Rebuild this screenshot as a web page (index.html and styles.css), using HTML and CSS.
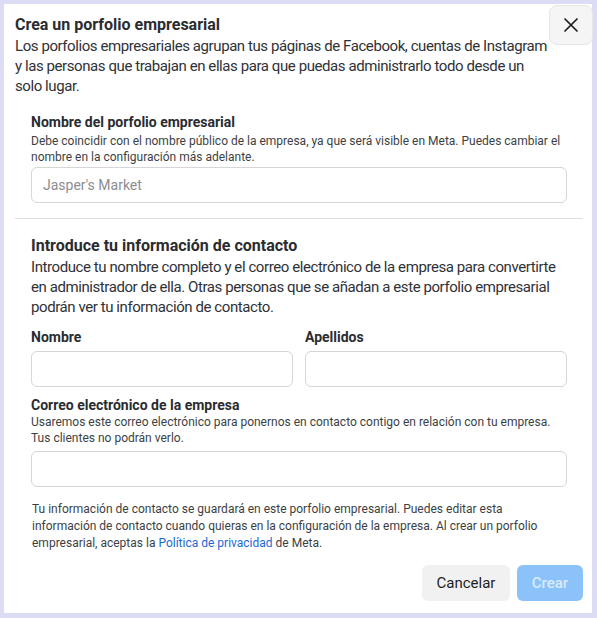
FILE: index.html
```html
<!DOCTYPE html>
<html lang="es">
<head>
<meta charset="utf-8">
<title>Crea un porfolio empresarial</title>
<link rel="stylesheet" href="styles.css">
</head>
<body>
<div class="card">
  <button class="close" aria-label="Cerrar">
    <svg width="16" height="16" viewBox="0 0 16 16"><path d="M2 2 L14 14 M14 2 L2 14" stroke="#1c1e21" stroke-width="1.7" stroke-linecap="round" fill="none"/></svg>
  </button>
  <header class="head">
    <h1 class="title">Crea un porfolio empresarial</h1>
    <p class="desc">Los porfolios empresariales agrupan tus páginas de Facebook, cuentas de Instagram y las personas que trabajan en ellas para que puedas administrarlo todo desde un solo lugar.</p>
  </header>
  <section class="sec1">
    <div class="label">Nombre del porfolio empresarial</div>
    <div class="help">Debe coincidir con el nombre público de la empresa, ya que será visible en Meta. Puedes cambiar el nombre en la configuración más adelante.</div>
    <div class="input"><span class="ph">Jasper's Market</span></div>
  </section>
  <hr class="divider">
  <section class="sec2">
    <h2 class="h2">Introduce tu información de contacto</h2>
    <p class="desc2">Introduce tu nombre completo y el correo electrónico de la empresa para convertirte en administrador de ella. Otras personas que se añadan a este porfolio empresarial podrán ver tu información de contacto.</p>
    <div class="row">
      <div class="col">
        <div class="label">Nombre</div>
        <div class="input in-name"></div>
      </div>
      <div class="col">
        <div class="label">Apellidos</div>
        <div class="input in-name"></div>
      </div>
    </div>
    <div class="label lab-mail">Correo electrónico de la empresa</div>
    <div class="help help-mail">Usaremos este correo electrónico para ponernos en contacto contigo en relación con tu empresa. Tus clientes no podrán verlo.</div>
    <div class="input in-mail"></div>
    <p class="foot">Tu información de contacto se guardará en este porfolio empresarial. Puedes editar esta información de contacto cuando quieras en la configuración de la empresa. Al crear un porfolio empresarial, aceptas la <a class="link" href="#">Política de privacidad</a> de Meta.</p>
  </section>
  <div class="actions">
    <button class="btn cancel">Cancelar</button>
    <button class="btn create">Crear</button>
  </div>
</div>
</body>
</html>
```
FILE: styles.css
```css
* { box-sizing: border-box; }
html, body { margin: 0; padding: 0; }
body {
  background: #dcdcf4;
  font-family: Roboto, "Liberation Sans", Arial, sans-serif;
  color: #2f3237;
  padding: 4px;
  width: 597px;
  height: 618px;
  overflow: hidden;
}
.card {
  position: relative;
  width: 588px;
  height: 609px;
  background: #fff;
  padding-top: 11px;
}
.close {
  position: absolute;
  top: 1px;
  right: -1px;
  width: 44px;
  height: 40px;
  background: #f5f5f6;
  border: 1px solid #e6e6e8;
  border-radius: 8px;
  display: flex;
  align-items: center;
  justify-content: center;
  padding: 0;
}
.head { padding: 0 40px 0 11px; }
.title {
  margin: 0;
  font-size: 16px;
  line-height: 20px;
  font-weight: 700;
  color: #2a2c30;
}
.desc {
  margin: 1px 0 0;
  font-size: 15px;
  line-height: 20px;
  letter-spacing: -0.42px;
  width: 535px;
}
.sec1 { padding: 0 25px 0 27px; margin-top: 17px; }
.label {
  font-size: 14px;
  line-height: 18px;
  font-weight: 700;
  color: #2a2c30;
}
.help {
  font-size: 12px;
  line-height: 16px;
  margin-top: 2px;
  color: #3c3f44;
}
.input {
  height: 36px;
  border: 1px solid #d6d6d9;
  border-radius: 6px;
  margin-top: 2px;
  display: flex;
  align-items: center;
  padding: 0 11px;
}
.ph { font-size: 14px; color: #8a8d91; }
.divider {
  margin: 15px 9px 0 11px;
  border: 0;
  border-top: 1px solid #dedfe2;
  height: 0;
}
.sec2 { padding: 0 25px 0 27px; margin-top: 17px; }
.h2 {
  margin: 0;
  font-size: 16px;
  line-height: 20px;
  font-weight: 700;
  color: #2a2c30;
}
.desc2 {
  margin: 1px 0 0;
  font-size: 15px;
  line-height: 20px;
  letter-spacing: -0.42px;
}
.row {
  display: grid;
  grid-template-columns: 1fr 1fr;
  column-gap: 12px;
  margin-top: 11px;
}
.in-name { margin-top: 5px; }
.lab-mail { margin-top: 10px; line-height: 17px; }
.help-mail { margin-top: 0; }
.in-mail { margin-top: 5px; }
.foot {
  margin: 14px 0 0 1px;
  font-size: 12px;
  line-height: 17px;
  color: #3c3f44;
}
.link { color: #1b6ad1; text-decoration: none; }
.actions {
  display: flex;
  justify-content: flex-end;
  gap: 7px;
  padding-right: 9px;
  margin-top: 13px;
}
.btn {
  height: 36px;
  border: 0;
  border-radius: 6px;
  font-family: Roboto, "Liberation Sans", Arial, sans-serif;
  font-size: 15px;
  padding: 0;
}
.cancel { width: 88px; background: #f1f1f2; color: #1c1e21; }
.create { width: 66px; background: #8cc2fa; color: #d9ecfe; font-weight: 500; }
```
